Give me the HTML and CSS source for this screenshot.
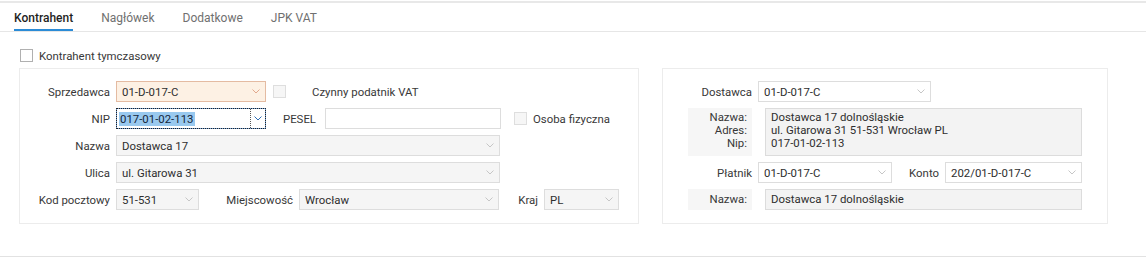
FILE: index.html
```html
<!DOCTYPE html>
<html lang="pl">

<head>
    <meta charset="UTF-8">
    <meta name="viewport" content="width=device-width, initial-scale=1.0">
    <title>Kontrahent</title>
    <link rel="stylesheet" href="styles.css">
</head>

<body>
    <!-- zakładki -->
    <div class="tabs">
        <div class="tab active">Kontrahent</div>
        <div class="tab">Nagłówek</div>
        <div class="tab">Dodatkowe</div>
        <div class="tab">JPK VAT</div>
    </div>

    <div class="content">
        <div class="check-row">
            <span class="checkbox"></span>
            <span>Kontrahent tymczasowy</span>
        </div>

        <div class="panels">
            <!-- sprzedawca -->
            <div class="panel panel-left">
                <div class="row">
                    <span class="label lbl-main">Sprzedawca</span>
                    <div class="field field-seller w-150">
                        <span class="value">01-D-017-C</span>
                        <svg class="chev" viewBox="0 0 8 5"><polyline points="0.5,0.5 4,4 7.5,0.5" /></svg>
                    </div>
                    <span class="checkbox disabled cb-vat"></span>
                    <span class="cb-text-vat">Czynny podatnik VAT</span>
                </div>
                <div class="row">
                    <span class="label lbl-main">NIP</span>
                    <div class="field field-focus w-150">
                        <span class="value"><span class="selected">017-01-02-113</span></span>
                        <span class="drop-btn">
                            <svg class="chev" viewBox="0 0 8 5"><polyline points="0.5,0.5 4,4 7.5,0.5" /></svg>
                        </span>
                    </div>
                    <span class="label lbl-pesel">PESEL</span>
                    <div class="field field-text w-176"></div>
                    <span class="checkbox disabled cb-osoba"></span>
                    <span class="cb-text">Osoba fizyczna</span>
                </div>
                <div class="row">
                    <span class="label lbl-main">Nazwa</span>
                    <div class="field w-384">
                        <span class="value">Dostawca 17</span>
                        <svg class="chev" viewBox="0 0 8 5"><polyline points="0.5,0.5 4,4 7.5,0.5" /></svg>
                    </div>
                </div>
                <div class="row">
                    <span class="label lbl-main">Ulica</span>
                    <div class="field w-384">
                        <span class="value">ul. Gitarowa 31</span>
                        <svg class="chev" viewBox="0 0 8 5"><polyline points="0.5,0.5 4,4 7.5,0.5" /></svg>
                    </div>
                </div>
                <div class="row">
                    <span class="label lbl-main">Kod pocztowy</span>
                    <div class="field w-83">
                        <span class="value">51-531</span>
                        <svg class="chev" viewBox="0 0 8 5"><polyline points="0.5,0.5 4,4 7.5,0.5" /></svg>
                    </div>
                    <span class="label lbl-city">Miejscowość</span>
                    <div class="field w-200">
                        <span class="value">Wrocław</span>
                        <svg class="chev" viewBox="0 0 8 5"><polyline points="0.5,0.5 4,4 7.5,0.5" /></svg>
                    </div>
                    <span class="label lbl-kraj">Kraj</span>
                    <div class="field w-75">
                        <span class="value">PL</span>
                        <svg class="chev" viewBox="0 0 8 5"><polyline points="0.5,0.5 4,4 7.5,0.5" /></svg>
                    </div>
                </div>
            </div>

            <!-- dostawca -->
            <div class="panel panel-right">
                <div class="row">
                    <span class="label lbl-right">Dostawca</span>
                    <div class="field field-text w-173">
                        <span class="value">01-D-017-C</span>
                        <svg class="chev" viewBox="0 0 8 5"><polyline points="0.5,0.5 4,4 7.5,0.5" /></svg>
                    </div>
                </div>
                <div class="row row-info">
                    <div class="info-label">
                        <div>Nazwa:</div>
                        <div>Adres:</div>
                        <div>Nip:</div>
                    </div>
                    <div class="info-value">
                        <div>Dostawca 17 dolnośląskie</div>
                        <div>ul. Gitarowa 31 51-531 Wrocław PL</div>
                        <div>017-01-02-113</div>
                    </div>
                </div>
                <div class="row">
                    <span class="label lbl-right">Płatnik</span>
                    <div class="field field-text w-134">
                        <span class="value">01-D-017-C</span>
                        <svg class="chev" viewBox="0 0 8 5"><polyline points="0.5,0.5 4,4 7.5,0.5" /></svg>
                    </div>
                    <span class="label lbl-konto">Konto</span>
                    <div class="field field-text w-137">
                        <span class="value">202/01-D-017-C</span>
                        <svg class="chev" viewBox="0 0 8 5"><polyline points="0.5,0.5 4,4 7.5,0.5" /></svg>
                    </div>
                </div>
                <div class="row">
                    <div class="info-label info-label-single">
                        <div>Nazwa:</div>
                    </div>
                    <div class="info-value info-single">
                        <div>Dostawca 17 dolnośląskie</div>
                    </div>
                </div>
            </div>
        </div>
    </div>

    <div class="bottom-rule"></div>
</body>

</html>
```

FILE: styles.css
```css
* {
    box-sizing: border-box;
}

body {
    margin: 0;
    padding-top: 1px;
    font-family: Roboto, "Liberation Sans", sans-serif;
    font-size: 12px;
    color: #333;
    background: #fff;
}

/* zakładki */
.tabs {
    display: flex;
    gap: 28px;
    padding-left: 14px;
    border-top: 2px solid #e8e8e8;
    border-bottom: 1px solid #e6e6e6;
}

.tab {
    padding: 8px 0 4px;
    line-height: 14px;
    border-bottom: 2px solid transparent;
    color: #707070;
}

.tab.active {
    color: #1f1f1f;
    font-weight: 500;
    border-bottom-color: #2b8bd6;
}

.content {
    padding: 17px 0 0 19px;
    font-size: 11.4px;
    color: #383838;
}

.check-row {
    display: flex;
    align-items: center;
    height: 13px;
    padding-left: 1px;
    gap: 6px;
}

.checkbox {
    width: 13px;
    height: 13px;
    border: 1px solid #b0b0b0;
    background: #fff;
    flex-shrink: 0;
}

.checkbox.disabled {
    border-color: #dedede;
    background: #f6f6f6;
}

.panels {
    display: flex;
    gap: 23px;
    margin-top: 6px;
}

.panel {
    border: 1px solid #ececec;
    padding: 12px 0 13px;
    display: flex;
    flex-direction: column;
    gap: 6px;
}

.panel-left {
    width: 620px;
}

.panel-right {
    width: 446px;
}

.row {
    display: flex;
    align-items: center;
    height: 21px;
}

.label {
    text-align: right;
    margin-right: 6px;
    flex-shrink: 0;
    white-space: nowrap;
}

.lbl-main {
    width: 90px;
}

.lbl-pesel {
    width: 53px;
    padding-right: 3px;
}

.lbl-city {
    width: 94px;
}

.lbl-kraj {
    width: 39px;
}

.lbl-right {
    width: 89px;
}

.lbl-konto {
    width: 47px;
}

/* pola */
.field {
    height: 21px;
    border: 1px solid #dddddd;
    background: #f5f5f5;
    display: flex;
    align-items: center;
    padding-left: 5px;
    flex-shrink: 0;
    color: #2e2e2e;
}

.field .value {
    flex: 1;
    white-space: nowrap;
    overflow: hidden;
}

.chev {
    width: 8px;
    height: 5px;
    margin-right: 5px;
    flex-shrink: 0;
}

.chev polyline {
    fill: none;
    stroke: #c6c6c6;
    stroke-width: 1;
}

.field-text {
    background: #fff;
}

.field-seller {
    background: #fdf1e4;
    border-color: #e4bba2;
}

.field-seller .chev polyline {
    stroke: #e2a88c;
}

.field-focus {
    background: #fff;
    border-color: #6f9fd6;
    outline: 1px dotted #222;
    outline-offset: -1px;
    padding-left: 2px;
}

.selected {
    background: #99c9ef;
    color: #14263a;
    padding: 0 2px 0 1px;
}

.drop-btn {
    width: 15px;
    height: 100%;
    border-left: 1px dotted #555;
    display: flex;
    align-items: center;
    justify-content: center;
}

.drop-btn .chev {
    margin-right: 0;
}

.drop-btn .chev polyline {
    stroke: #2f6fb6;
}

.w-150 { width: 150px; }
.w-176 { width: 176px; }
.w-384 { width: 384px; }
.w-83 { width: 83px; }
.w-200 { width: 200px; }
.w-75 { width: 75px; }
.w-173 { width: 173px; }
.w-134 { width: 134px; }
.w-137 { width: 137px; }

.cb-vat {
    margin-left: 7px;
}

.cb-text-vat {
    margin-left: 26px;
}

.cb-osoba {
    margin-left: 13px;
}

.cb-text {
    margin-left: 6px;
}

/* blok informacyjny dostawcy */
.row-info {
    height: 48px;
    align-items: stretch;
}

.info-label {
    width: 64px;
    margin-left: 25px;
    background: #f6f6f6;
    text-align: right;
    padding: 3px 5px 0 0;
    line-height: 13px;
    align-self: stretch;
}

.info-label-single {
    padding-top: 4px;
}

.info-value {
    width: 317px;
    margin-left: 13px;
    border: 1px solid #dcdcdc;
    background: #f3f3f3;
    padding: 2px 5px 0;
    line-height: 13px;
    color: #2e2e2e;
    align-self: stretch;
}

.info-single {
    padding-top: 3px;
}

.bottom-rule {
    margin-top: 32px;
    border-top: 1px solid #e2e2e2;
}
```
